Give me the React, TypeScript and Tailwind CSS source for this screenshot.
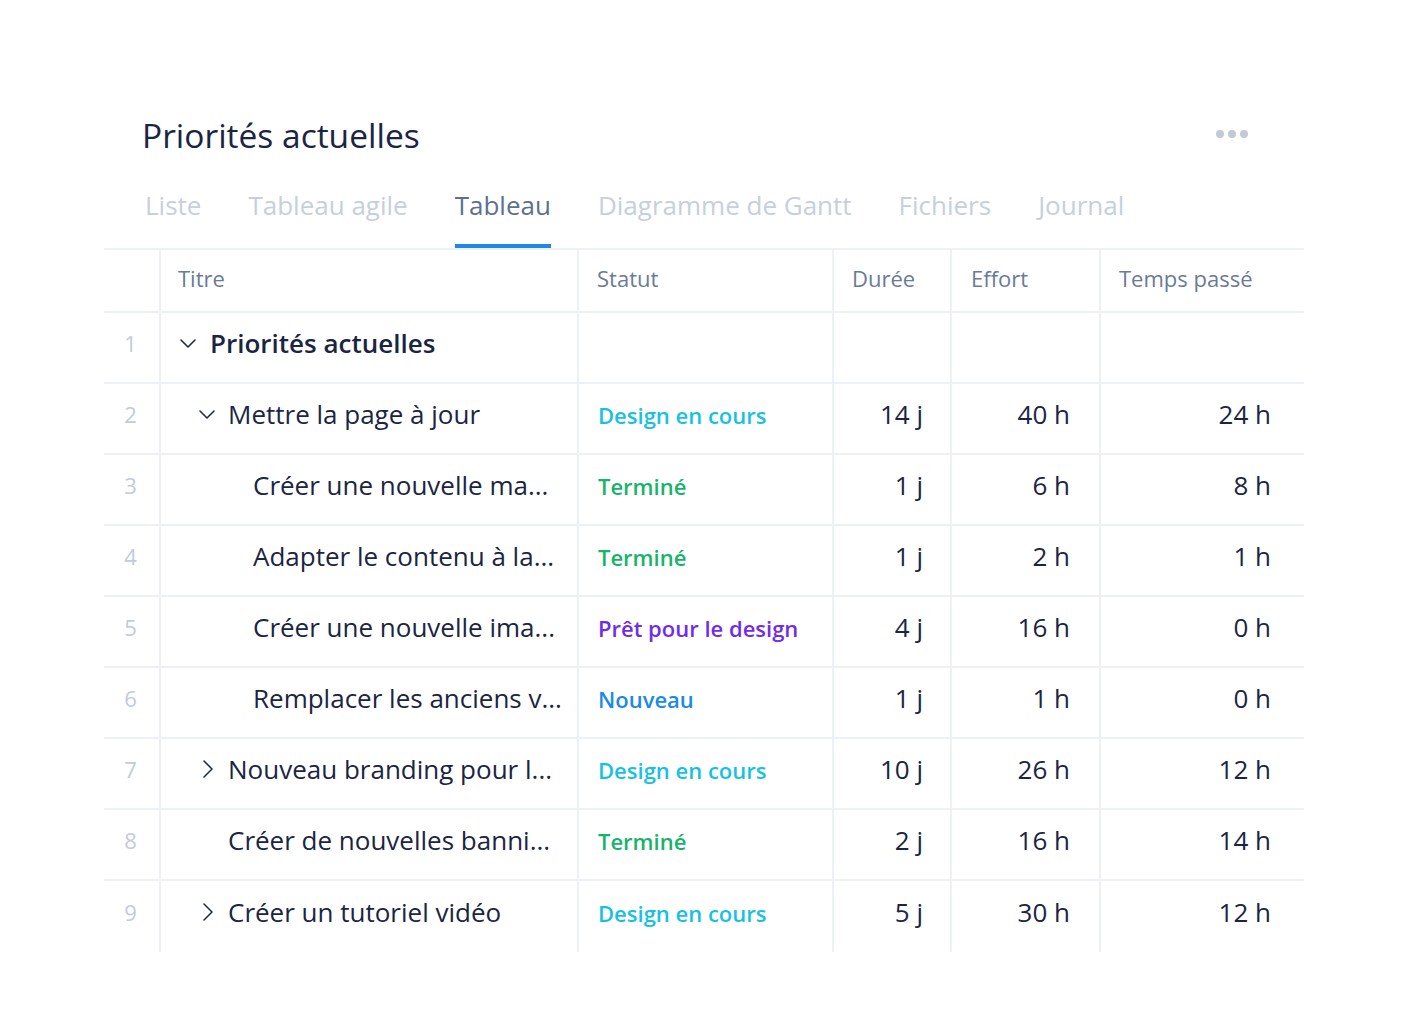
type Row = {
  n: number
  title: string
  level: number
  chevron?: "down" | "right"
  bold?: boolean
  status?: string
  statusColor?: string
  duree?: string
  effort?: string
  temps?: string
}

const rows: Row[] = [
  { n: 1, title: "Priorités actuelles", level: 0, chevron: "down", bold: true },
  { n: 2, title: "Mettre la page à jour", level: 1, chevron: "down", status: "Design en cours", statusColor: "text-[#17c1e2]", duree: "14 j", effort: "40 h", temps: "24 h" },
  { n: 3, title: "Créer une nouvelle ma...", level: 2, status: "Terminé", statusColor: "text-[#16b46a]", duree: "1 j", effort: "6 h", temps: "8 h" },
  { n: 4, title: "Adapter le contenu à la...", level: 2, status: "Terminé", statusColor: "text-[#16b46a]", duree: "1 j", effort: "2 h", temps: "1 h" },
  { n: 5, title: "Créer une nouvelle ima...", level: 2, status: "Prêt pour le design", statusColor: "text-[#6f2cf0]", duree: "4 j", effort: "16 h", temps: "0 h" },
  { n: 6, title: "Remplacer les anciens v...", level: 2, status: "Nouveau", statusColor: "text-[#1a8ae8]", duree: "1 j", effort: "1 h", temps: "0 h" },
  { n: 7, title: "Nouveau branding pour l...", level: 1, chevron: "right", status: "Design en cours", statusColor: "text-[#17c1e2]", duree: "10 j", effort: "26 h", temps: "12 h" },
  { n: 8, title: "Créer de nouvelles banni...", level: 1, status: "Terminé", statusColor: "text-[#16b46a]", duree: "2 j", effort: "16 h", temps: "14 h" },
  { n: 9, title: "Créer un tutoriel vidéo", level: 1, chevron: "right", status: "Design en cours", statusColor: "text-[#17c1e2]", duree: "5 j", effort: "30 h", temps: "12 h" },
]

const tabs = ["Liste", "Tableau agile", "Tableau", "Diagramme de Gantt", "Fichiers", "Journal"]

const Chevron = ({ dir }: { dir: "down" | "right" }) => (
  <svg width="17" height="18" viewBox="0 0 17 18" fill="none" stroke="#1b2542" strokeWidth="1.5" strokeLinecap="round" strokeLinejoin="round">
    {dir === "down" ? <polyline points="2,6 9,13 16,6" /> : <polyline points="6,1 14,9 6,17" />}
  </svg>
)

const TitleCell = ({ row }: { row: Row }) => {
  const pad = row.level === 0 ? "pl-[18px] gap-[14px]" : row.level === 1 ? "pl-[37px] gap-[13px]" : "pl-[92px]"
  return (
    <div className={`w-[418px] border-r-2 border-[#edf0f6] flex items-center pb-[8px] ${pad}`}>
      {row.chevron && <Chevron dir={row.chevron} />}
      {!row.chevron && row.level === 1 && <span className="w-[17px]" />}
      <span className={`text-[26px] text-[#1b2542] whitespace-nowrap ${row.bold ? "font-semibold" : ""}`}>{row.title}</span>
    </div>
  )
}

const App = () => {
  return (
    <div className="min-h-screen bg-white pt-[119px] pl-[104px]" style={{ fontFamily: '"Open Sans", sans-serif' }}>
      <div className="w-[1200px]">
        <div className="flex items-center justify-between pl-[38px] pr-[56px]">
          <h1 className="text-[33.5px] text-[#1b2542] leading-none">Priorités actuelles</h1>
          <div className="flex gap-[4px] -mt-[4px]">
            <span className="w-[8px] h-[8px] rounded-full bg-[#c2c8d6]" />
            <span className="w-[8px] h-[8px] rounded-full bg-[#c2c8d6]" />
            <span className="w-[8px] h-[8px] rounded-full bg-[#c2c8d6]" />
          </div>
        </div>

        <div className="flex gap-[47px] pl-[41px] mt-[36px]">
          {tabs.map((t) => (
            <div key={t} className={`pb-[23px] border-b-4 text-[26px] leading-[32px] ${t === "Tableau" ? "border-[#1e88e5] text-[#5f6f8f]" : "border-transparent text-[#c7cfdd]"}`}>
              {t}
            </div>
          ))}
        </div>

        <div className="border-t-2 border-[#edf0f6]">
          <div className="flex h-[63px] border-b-2 border-[#edf0f6] text-[22px] text-[#6b7a99]">
            <div className="w-[57px] border-r-2 border-[#edf0f6]" />
            <div className="w-[418px] border-r-2 border-[#edf0f6] flex items-center pl-[17px] pb-[4px]">Titre</div>
            <div className="w-[255px] border-r-2 border-[#edf0f6] flex items-center pl-[18px] pb-[4px]">Statut</div>
            <div className="w-[118px] border-r-2 border-[#edf0f6] flex items-center pl-[18px] pb-[4px]">Durée</div>
            <div className="w-[149px] border-r-2 border-[#edf0f6] flex items-center pl-[19px] pb-[4px]">Effort</div>
            <div className="flex-1 flex items-center pl-[18px] pb-[4px]">Temps passé</div>
          </div>

          {rows.map((row, i) => (
            <div key={row.n} className={`flex h-[71px] ${i < rows.length - 1 ? "border-b-2 border-[#edf0f6]" : ""}`}>
              <div className="w-[57px] border-r-2 border-[#edf0f6] flex items-center justify-center text-[22px] text-[#c3cadb] pr-[2px] pb-[8px]">{row.n}</div>
              <TitleCell row={row} />
              <div className={`w-[255px] border-r-2 border-[#edf0f6] flex items-center pl-[19px] text-[22px] font-semibold pb-[5px] ${row.statusColor ?? ""}`}>{row.status}</div>
              <div className="w-[118px] border-r-2 border-[#edf0f6] flex items-center justify-end pr-[27px] text-[26px] text-[#1b2542] pb-[8px]">{row.duree}</div>
              <div className="w-[149px] border-r-2 border-[#edf0f6] flex items-center justify-end pr-[29px] text-[26px] text-[#1b2542] pb-[8px]">{row.effort}</div>
              <div className="flex-1 flex items-center justify-end pr-[33px] text-[26px] text-[#1b2542] pb-[8px]">{row.temps}</div>
            </div>
          ))}
        </div>
      </div>
    </div>
  )
}

export default App
